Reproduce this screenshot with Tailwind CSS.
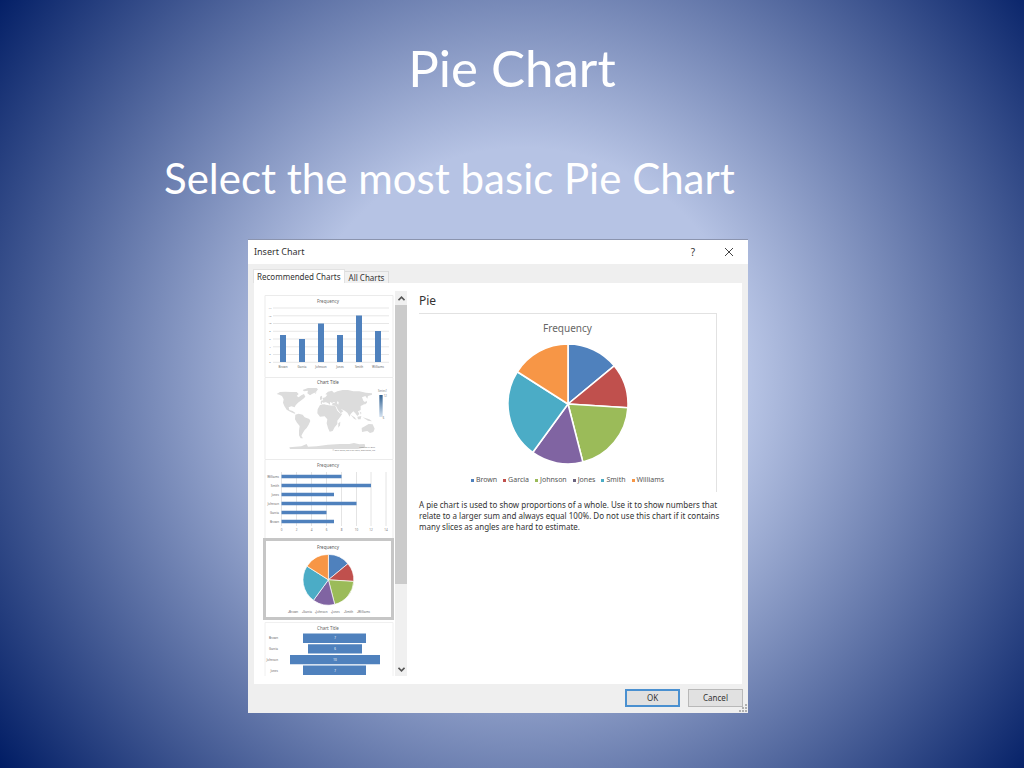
<!DOCTYPE html>
<html lang="en">
<head>
    <meta charset="UTF-8">
    <meta name="viewport" content="width=device-width, initial-scale=1.0">
    <title>Pie Chart</title>
    <script src="https://cdn.jsdelivr.net/npm/@tailwindcss/browser@4"></script>
</head>
<body class="min-h-screen bg-[radial-gradient(circle_at_51%_49%,#b6c3e4_0%,#b6c3e4_35%,#001c64_100%)] font-['Noto_Sans',sans-serif]">

    <!-- pie slices shared by the preview and the thumbnail -->
    <svg class="hidden">
        <symbol id="pie" viewBox="-61 -61 122 122">
            <g stroke="#fff" stroke-width="1.6" stroke-linejoin="round">
                <path fill="#4f81bd" d="M0 0V-60A60 60 0 0 1 46.2 -38.2Z"/>
                <path fill="#c0504d" d="M0 0L46.2 -38.2A60 60 0 0 1 59.9 3.8Z"/>
                <path fill="#9bbb59" d="M0 0L59.9 3.8A60 60 0 0 1 14.9 58.1Z"/>
                <path fill="#8064a2" d="M0 0L14.9 58.1A60 60 0 0 1 -35.3 48.5Z"/>
                <path fill="#4bacc6" d="M0 0L-35.3 48.5A60 60 0 0 1 -50.7 -32.2Z"/>
                <path fill="#f79646" d="M0 0L-50.7 -32.2A60 60 0 0 1 0 -60Z"/>
            </g>
        </symbol>
    </svg>

    <main class="flex flex-col">
        <h1 class="pt-[38px] text-center font-['Lato',sans-serif] text-[51px] leading-[60px] text-white">Pie Chart</h1>
        <p class="mt-[50px] pl-41 font-['Lato',sans-serif] text-[42px] leading-[60px] text-white">Select the most basic Pie Chart</p>

        <section class="mt-[31px] mr-69 ml-62 border-t border-[#8b94ae] bg-[#efefef] text-[8px] text-[#333]">
            <header class="flex h-6 items-center bg-white pr-px pl-[6px]">
                <h2 class="grow text-[9px]">Insert Chart</h2>
                <button class="w-9 text-[10px]" aria-label="Help">?</button>
                <button class="flex w-9 justify-center" aria-label="Close">
                    <svg class="size-2" viewBox="0 0 8 8" stroke="#444" fill="none"><path d="M0 0L8 8M8 0L0 8"/></svg>
                </button>
            </header>

            <nav class="flex items-end pt-[5px] pl-[5px]">
                <button class="h-[14px] border-x border-t border-[#e2e2e2] bg-white px-[3px] leading-[12px]">Recommended Charts</button>
                <button class="h-3 border-t border-r border-[#dcdcdc] bg-[#f1f1f1] px-1 leading-[12px]">All Charts</button>
            </nav>

            <div class="mx-[6px] flex h-[401px] bg-white pt-2 pb-2">
                <div class="flex w-[141px] shrink-0 flex-col pt-1 pl-[9px]">
                    <button aria-label="Clustered column">
                        <svg class="h-[82px] w-[131px]" viewBox="-2 0 131 82" fill="none">
                            <path stroke="#ebebeb" d="M0 82V.5H128V82"/>
                            <path stroke="#ddd" stroke-width=".7" d="M8 13H124M8 20.8H124M8 28.5H124M8 36.3H124M8 44H124M8 51.8H124M8 59.5H124M8 67.3H124"/>
                            <path fill="#4f81bd" d="M15 40h6v27h-6zM34 44h6v23h-6zM53 28.500h6v38.500h-6zM72 40h6v27h-6zM91 20.500h6v46.500h-6zM110 36h6v31h-6z"/>
                            <text x="63" y="8" font-size="4.500" text-anchor="middle" fill="#666">Frequency</text>
                            <g font-size="2.500" fill="#777" text-anchor="middle">
                                <text x="5" y="14">14</text><text x="5" y="22">12</text><text x="5" y="29">10</text><text x="5" y="37">8</text><text x="5" y="45">6</text><text x="5" y="53">4</text><text x="5" y="60">2</text><text x="5" y="68">0</text>
                            </g>
                            <g font-size="3" fill="#666" text-anchor="middle">
                                <text x="18" y="73">Brown</text><text x="37" y="73">Garcia</text><text x="56" y="73">Johnson</text><text x="75" y="73">Jones</text><text x="94" y="73">Smith</text><text x="113" y="73">Williams</text>
                            </g>
                        </svg>
                    </button>
                    <button aria-label="Filled map">
                        <svg class="h-[82px] w-[131px]" viewBox="-2 0 131 82" fill="none">
                            <defs>
                                <linearGradient id="scale" x1="0" y1="0" x2="0" y2="1"><stop stop-color="#2f5f90"/><stop offset="1" stop-color="#d6e4f2"/></linearGradient>
                            </defs>
                            <path stroke="#ebebeb" d="M0 82V.5H128V82"/>
                            <text x="63" y="7" font-size="4.500" text-anchor="middle" fill="#555">Chart Title</text>
                            <g transform="translate(-17 -7) scale(.3333)" fill="#dcdcdc">
                                <path d="M86 72L96 66L112 65L130 66L146 66L152 72L146 78L152 82L160 76L168 72L172 80L166 86L158 92L150 98L143 106L140 112L130 109L122 112L124 120L134 123L142 129L140 131L128 126L116 119L109 108L105 98L107 88L102 78L94 74Z"/>
                                <path d="M164 60L180 54L206 54L210 58L204 66L192 72L186 76L178 70L180 62L168 64Z"/>
                                <path d="M142 134L152 131L164 134L170 142L184 147L187 153L182 164L176 174L170 180L164 190L160 198L165 205L158 205L153 196L153 182L155 168L147 158L141 148Z"/>
                                <path d="M216 105L228 103L242 106L262 108L268 122L276 130L283 131L276 142L268 152L268 162L260 172L254 183L245 185L240 174L236 160L238 148L230 139L216 140L208 130L209 118Z"/>
                                <path d="M271 160L277 155L276 166L271 173Z"/>
                                <path d="M218 100L219 92L226 91L224 84L232 82L238 74L232 73L240 65L252 62L258 68L268 64L284 60L300 60L316 64L334 64L354 68L372 70L372 74L360 78L358 86L352 78L342 82L346 92L353 98L346 104L338 108L338 120L330 124L334 132L328 138L322 130L316 124L308 132L305 140L298 128L290 122L278 116L286 124L278 130L270 120L264 108L252 106L254 100L246 96L246 104L238 98L230 98L224 104Z"/>
                                <path d="M216 80L222 77L223 88L216 90ZM308 134L320 142L326 150L318 146ZM328 140L340 138L338 148L330 148ZM344 142L364 148L372 154L360 152ZM348 98L356 92L357 98L350 104ZM334 124L340 128L339 134Z"/>
                                <path d="M341 174L352 168L362 162L374 163L380 176L376 186L366 189L358 183L342 186ZM198 66L206 68L202 71Z"/>
                                <path d="M124 232L160 229L176 222L180 230L206 229L240 224L276 222L304 222L318 219L334 223L350 222L352 232L330 237L126 237Z"/>
                                <path fill="#fff" d="M222 96L226 98L234 97L242 101L240 104L230 102L222 103ZM252 96L262 97L258 100ZM268 94L272 96L271 104L267 100Z"/>
                                <rect x="394" y="75" width="10" height="66" fill="url(#scale)"/>
                                <g fill="#777" font-size="8">
                                    <text x="390" y="65">Series1</text><text x="407" y="80">12</text><text x="404" y="147">6</text>
                                    <text x="381" y="234" font-size="6" text-anchor="end">Powered by Bing</text>
                                    <text x="381" y="242" font-size="6" text-anchor="end">© DSAT Editor, DSAT for MSFT, GeoNames, MS</text>
                                </g>
                            </g>
                        </svg>
                    </button>
                    <button aria-label="Clustered bar">
                        <svg class="h-[79px] w-[131px]" viewBox="-2 0 131 79" fill="none">
                            <path stroke="#ebebeb" d="M0 79V.5H128V79"/>
                            <path stroke="#ddd" stroke-width=".8" d="M16.500 13V67M31.500 13V67M46.500 13V67M61.500 13V67M76.500 13V67M91.500 13V67M106 13V67M121 13V67"/>
                            <path stroke="#4f81bd" stroke-width="3.400" d="M16.500 17.500H76.500M16.500 26.500H106M16.500 35.500H69M16.500 44.500H91.500M16.500 53.500H61.500M16.500 62.500H69"/>
                            <text x="63" y="7.500" font-size="4.500" text-anchor="middle" fill="#666">Frequency</text>
                            <g font-size="3" fill="#666" text-anchor="end">
                                <text x="14" y="18.500">Williams</text><text x="14" y="27.500">Smith</text><text x="14" y="36.500">Jones</text><text x="14" y="45.500">Johnson</text><text x="14" y="54.500">Garcia</text><text x="14" y="63.500">Brown</text>
                            </g>
                            <g font-size="3" fill="#777" text-anchor="middle">
                                <text x="16.500" y="72">0</text><text x="31.500" y="72">2</text><text x="46.500" y="72">4</text><text x="61.500" y="72">6</text><text x="76.500" y="72">8</text><text x="91.500" y="72">10</text><text x="106" y="72">12</text><text x="121" y="72">14</text>
                            </g>
                        </svg>
                    </button>
                    <button class="w-[131px] border-3 border-[#c6c6c6]" aria-label="Pie" aria-pressed="true">
                        <svg class="h-[76px] w-full" viewBox="1 3 125 76" fill="none">
                            <text x="63" y="10.500" font-size="4.500" text-anchor="middle" fill="#555">Frequency</text>
                            <use href="#pie" x="37.600" y="16" width="51.600" height="51.600"/>
                            <g font-size="3" fill="#666">
                                <text x="23" y="74.500">▪Brown</text><text x="37" y="74.500">▪Garcia</text><text x="50" y="74.500">▪Johnson</text><text x="66" y="74.500">▪Jones</text><text x="79" y="74.500">▪Smith</text><text x="92" y="74.500">▪Williams</text>
                            </g>
                        </svg>
                    </button>
                    <button aria-label="Funnel">
                        <svg class="h-[56px] w-[131px]" viewBox="-2 -2 131 56" fill="none">
                            <path stroke="#f0f0f0" d="M0 54V.5H128V54"/>
                            <text x="63" y="7.500" font-size="4.500" text-anchor="middle" fill="#666">Chart Title</text>
                            <path fill="#4f81bd" d="M38 11.500h63v9.500h-63zM43 22.300h54v9.300h-54zM25 33h90v9.300h-90zM38 43.600h63v9.300h-63z"/>
                            <g font-size="3" fill="#666" text-anchor="end">
                                <text x="13" y="17">Brown</text><text x="13" y="28">Garcia</text><text x="13" y="38.500">Johnson</text><text x="13" y="49.500">Jones</text>
                            </g>
                            <g font-size="3" fill="#fff" text-anchor="middle">
                                <text x="70" y="17">7</text><text x="70" y="28">6</text><text x="70" y="38.500">10</text><text x="70" y="49.500">7</text>
                            </g>
                        </svg>
                    </button>
                </div>

                <div class="flex w-3 shrink-0 flex-col bg-[#f0f0f0]">
                    <button class="flex h-[14px] items-center justify-center" aria-label="Scroll up">
                        <svg class="h-[5px] w-[7px]" viewBox="0 0 7 5" fill="none" stroke="#555" stroke-width="1.600"><path d="M.5 4.200L3.500 1.200L6.500 4.200"/></svg>
                    </button>
                    <div class="h-[279px] bg-[#cbcbcb]"></div>
                    <button class="mt-auto flex h-[14px] items-center justify-center" aria-label="Scroll down">
                        <svg class="h-[5px] w-[7px]" viewBox="0 0 7 5" fill="none" stroke="#555" stroke-width="1.600"><path d="M.5 .8L3.500 3.800L6.500 .8"/></svg>
                    </button>
                </div>

                <div class="grow pr-5 pl-3">
                    <h3 class="pt-[2px] text-xs leading-4">Pie</h3>
                    <figure class="mt-1 mr-[5px] flex h-[179px] flex-col items-center border-t border-r border-[#e2e2e2]">
                        <figcaption class="mt-[6px] text-[10px] leading-4 text-[#666]">Frequency</figcaption>
                        <svg class="mt-[7px] size-[122px]"><use href="#pie"/></svg>
                        <ul class="mt-[10px] flex gap-[6px] text-[7px] leading-[10px] text-[#555]">
                            <li class="flex items-center gap-[2px]"><i class="size-[3px] bg-[#4f81bd]"></i>Brown</li>
                            <li class="flex items-center gap-[2px]"><i class="size-[3px] bg-[#c0504d]"></i>Garcia</li>
                            <li class="flex items-center gap-[2px]"><i class="size-[3px] bg-[#9bbb59]"></i>Johnson</li>
                            <li class="flex items-center gap-[2px]"><i class="size-[3px] bg-[#6b6480]"></i>Jones</li>
                            <li class="flex items-center gap-[2px]"><i class="size-[3px] bg-[#4bacc6]"></i>Smith</li>
                            <li class="flex items-center gap-[2px]"><i class="size-[3px] bg-[#f79646]"></i>Williams</li>
                        </ul>
                    </figure>
                    <p class="mt-[7px] leading-[11px]">A pie chart is used to show proportions of a whole. Use it to show numbers that relate to a larger sum and always equal 100%. Do not use this chart if it contains many slices as angles are hard to estimate.</p>
                </div>
            </div>

            <footer class="relative flex justify-end gap-2 pt-[5px] pr-[5px] pb-[6px]">
                <button class="h-[18px] w-[55px] border-2 border-[#4a90d0] bg-[#e1e1e1]">OK</button>
                <button class="h-[18px] w-[55px] border border-[#b8b8b8] bg-[#e1e1e1]">Cancel</button>
                <svg class="absolute right-[1px] bottom-[1px] size-2" viewBox="0 0 8 8" fill="#b0b0b0"><path d="M6 0h2v2h-2zM3 3h2v2h-2zM6 3h2v2h-2zM0 6h2v2h-2zM3 6h2v2h-2zM6 6h2v2h-2z"/></svg>
            </footer>
        </section>
    </main>
</body>
</html>
